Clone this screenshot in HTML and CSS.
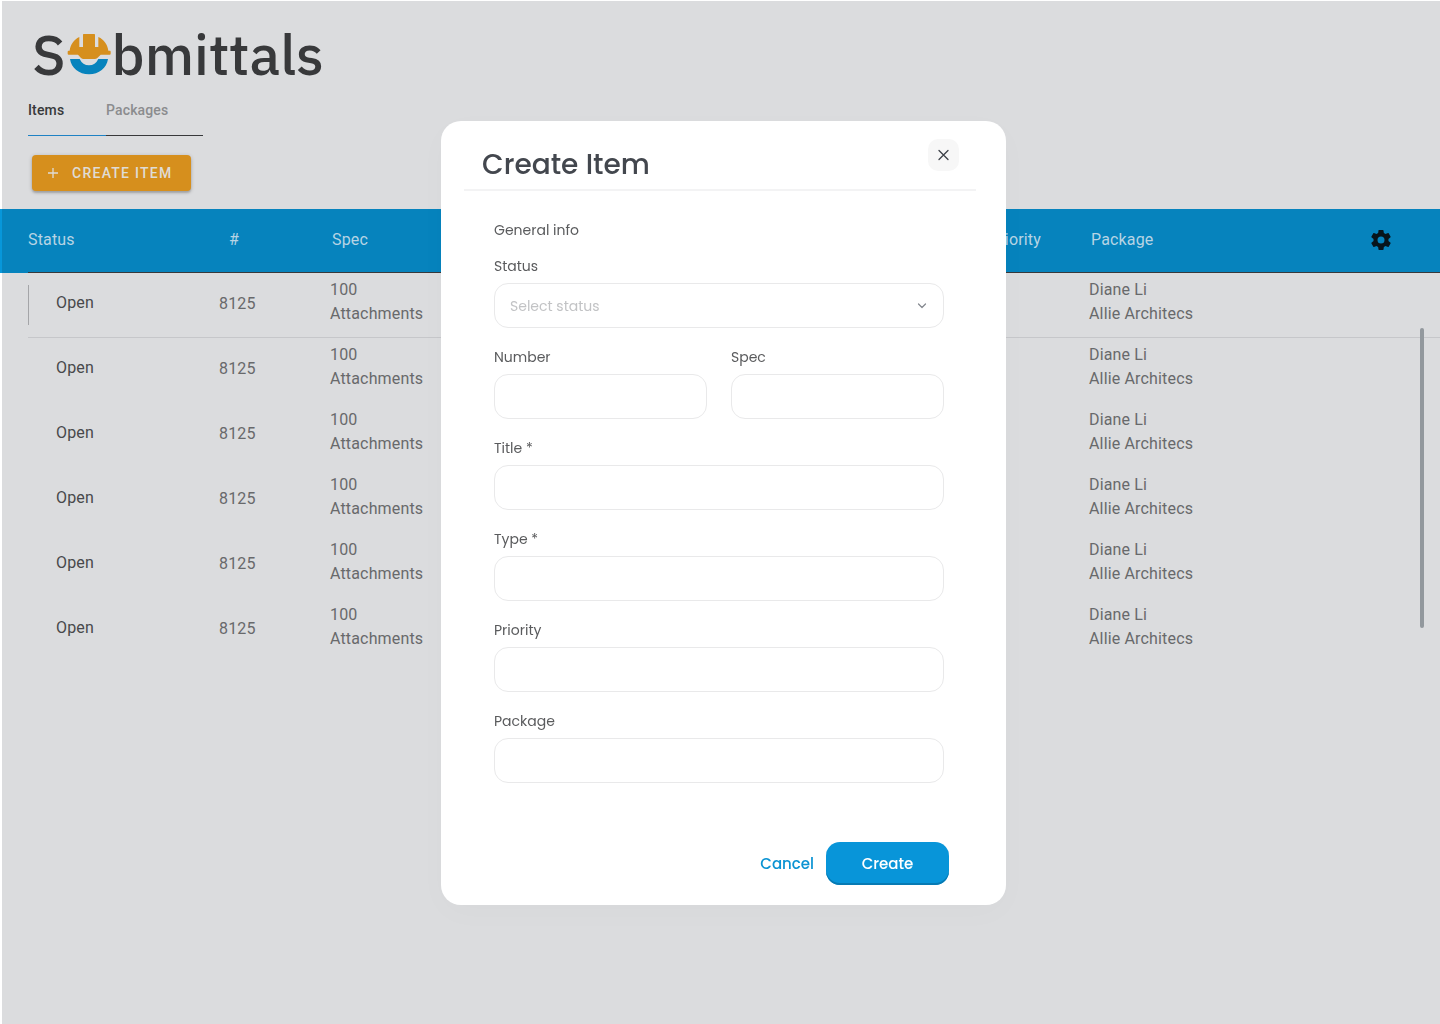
FILE: index.html
```html
<!DOCTYPE html>
<html lang="en">
<head>
  <meta charset="utf-8">
  <meta name="viewport" content="width=device-width, initial-scale=1">
  <title>Submittals</title>
  <link rel="stylesheet" href="styles.css">
</head>
<body>
  <div class="page">
    <header class="top">
      <h1 class="logo" aria-label="Submittals">
        <span>S</span>
        <svg class="logo-mark" viewBox="200 100 132 126" aria-hidden="true">
          <path fill="#d68f1d" d="M250 103H282Q284 103 284 105V142H294V112C312 120 322 136 324 153H329Q331 153 331 156V162Q331 165 328 165H301L291 175Q288 178 283 178H250Q245 178 242 175L233 165H205Q202 165 202 162V156Q202 153 205 153H208C210 136 220 120 237 112V142H248V105Q248 103 250 103Z"/>
          <path fill="#0683bd" d="M209 178H238Q247 197 266 197T294 178H323C319 205 296 224 266 224S213 205 209 178Z"/>
        </svg>
        <span>bmittals</span>
      </h1>
      <nav class="tabs">
        <a class="tab tab-active" href="#items">Items</a>
        <a class="tab" href="#packages">Packages</a>
      </nav>
      <button class="create-item" type="button">
        <svg width="12" height="12" viewBox="0 0 12 12" aria-hidden="true"><path d="M6 1V11M1 6H11" stroke="currentColor" stroke-width="1.3"/></svg>
        CREATE ITEM
      </button>
    </header>

    <main class="list">
      <table class="items">
        <colgroup>
          <col class="col-status"><col class="col-number"><col><col class="col-priority"><col class="col-package"><col class="col-settings">
        </colgroup>
        <thead>
          <tr>
            <th>Status</th><th class="number-head">#</th><th>Spec</th><th>Priority</th><th>Package</th>
            <th>
              <button class="settings" type="button" aria-label="Table settings">
                <svg width="24" height="24" viewBox="0 0 24 24" aria-hidden="true"><path fill="currentColor" d="M12 15.5A3.5 3.5 0 0 1 8.500 12 3.500 3.500 0 0 1 12 8.500a3.500 3.500 0 0 1 3.500 3.500 3.500 3.500 0 0 1-3.500 3.500m7.430-2.530c.04-.32.07-.64.07-.97s-.03-.66-.07-1l2.110-1.630c.19-.15.24-.42.12-.64l-2-3.460c-.12-.22-.39-.31-.61-.22l-2.490 1c-.52-.39-1.060-.73-1.690-.98l-.37-2.650A.506.506 0 0 0 14 2h-4c-.25 0-.46.18-.5.42l-.37 2.650c-.63.25-1.170.59-1.690.98l-2.490-1c-.22-.09-.49 0-.61.22l-2 3.460c-.13.22-.07.49.12.64L4.570 11c-.04.34-.07.67-.07 1s.03.65.07.97l-2.110 1.660c-.19.15-.25.42-.12.64l2 3.460c.12.22.39.3.61.22l2.490-1.010c.52.4 1.060.74 1.690.99l.37 2.650c.04.24.25.42.5.42h4c.25 0 .46-.18.5-.42l.37-2.650c.63-.26 1.170-.59 1.690-.99l2.490 1.010c.22.08.49 0 .61-.22l2-3.460c.12-.22.07-.49-.12-.64z"/></svg>
              </button>
            </th>
          </tr>
        </thead>
        <tbody>
          <tr class="current"><td class="status"><div>Open</div></td><td class="number">8125</td><td>100<br>Attachments</td><td></td><td>Diane Li<br>Allie Architecs</td><td></td></tr>
          <tr><td class="status"><div>Open</div></td><td class="number">8125</td><td>100<br>Attachments</td><td></td><td>Diane Li<br>Allie Architecs</td><td></td></tr>
          <tr><td class="status"><div>Open</div></td><td class="number">8125</td><td>100<br>Attachments</td><td></td><td>Diane Li<br>Allie Architecs</td><td></td></tr>
          <tr><td class="status"><div>Open</div></td><td class="number">8125</td><td>100<br>Attachments</td><td></td><td>Diane Li<br>Allie Architecs</td><td></td></tr>
          <tr><td class="status"><div>Open</div></td><td class="number">8125</td><td>100<br>Attachments</td><td></td><td>Diane Li<br>Allie Architecs</td><td></td></tr>
          <tr><td class="status"><div>Open</div></td><td class="number">8125</td><td>100<br>Attachments</td><td></td><td>Diane Li<br>Allie Architecs</td><td></td></tr>
        </tbody>
      </table>
      <div class="scroll-thumb"></div>
    </main>
  </div>

  <div class="overlay">
    <form class="dialog" role="dialog" aria-labelledby="dialog-title">
      <div class="dialog-head">
        <h2 id="dialog-title">Create Item</h2>
        <button class="close" type="button" aria-label="Close">
          <svg width="11" height="12" viewBox="0 0 11 12" aria-hidden="true"><path d="M1 1.500L10 10.500M10 1.500L1 10.500" stroke="currentColor" stroke-width="1.3" stroke-linecap="round"/></svg>
        </button>
      </div>
      <div class="fields">
        <h3>General info</h3>
        <div class="field">
          <label for="status">Status</label>
          <div class="select">
            <select id="status"><option>Select status</option></select>
            <svg width="10" height="6" viewBox="0 0 10 6" aria-hidden="true"><path d="M1.500 1L5 4.500L8.500 1" fill="none" stroke="currentColor" stroke-width="1.200" stroke-linecap="round" stroke-linejoin="round"/></svg>
          </div>
        </div>
        <div class="pair">
          <div class="field"><label for="number">Number</label><input id="number" type="text"></div>
          <div class="field"><label for="spec">Spec</label><input id="spec" type="text"></div>
        </div>
        <div class="field"><label for="title">Title *</label><input id="title" type="text" required></div>
        <div class="field"><label for="type">Type *</label><input id="type" type="text" required></div>
        <div class="field"><label for="priority">Priority</label><input id="priority" type="text"></div>
        <div class="field"><label for="package">Package</label><input id="package" type="text"></div>
      </div>
      <div class="actions">
        <button class="cancel" type="button">Cancel</button>
        <button class="create" type="submit">Create</button>
      </div>
    </form>
  </div>
</body>
</html>
```
FILE: styles.css
```css
* {
  box-sizing: border-box;
}

body {
  margin: 0;
  background: #dbdcde;
  font-family: Roboto, "Liberation Sans", sans-serif;
}

h1, h2, h3 {
  margin: 0;
}

button {
  border: 0;
  padding: 0;
  background: none;
  font: inherit;
  cursor: pointer;
}

svg {
  display: block;
}

.page {
  min-height: 100vh;
  border-top: 1px solid #fff;
  background: linear-gradient(#fff, #fff) left / 2px 100% no-repeat;
}

/* Page header */
.top {
  display: flex;
  flex-direction: column;
  align-items: flex-start;
  padding: 22px 28px 18px;
}

.logo {
  display: flex;
  align-items: center;
  gap: 1px;
  padding-left: 4px;
  color: #38393b;
  font: 500 56px/62px "IBM Plex Sans", Inter, sans-serif;
  padding-bottom: 2px;
}

.logo-mark {
  width: 44px;
  height: 42px;
}

.tabs {
  display: flex;
}

.tab {
  min-width: 78px;
  height: 49px;
  padding-right: 35px;
  border-bottom: 1px solid #38393b;
  color: #8b8c8e;
  font-size: 14px;
  font-weight: 500;
  line-height: 46px;
  letter-spacing: 0.01em;
  text-decoration: none;
}

.tab-active {
  padding-right: 0;
  border-color: #1f82c4;
  color: #38393b;
}

.create-item {
  display: flex;
  align-items: center;
  gap: 13px;
  height: 36px;
  margin: 19px 0 0 4px;
  padding: 0 18px 0 15px;
  border-radius: 4px;
  background: #d68f1d;
  box-shadow: 0 1px 4px rgba(0, 0, 0, 0.2), 0 2px 2px rgba(0, 0, 0, 0.16);
  color: #dfdcd6;
  font-size: 14px;
  font-weight: 500;
  letter-spacing: 0.09em;
}

/* Items table */
.list {
  position: relative;
  padding-left: 28px;
}

.items {
  width: 100%;
  border-spacing: 0;
  table-layout: fixed;
  color: #68696b;
  font-size: 16px;
  line-height: 24px;
  letter-spacing: 0.01em;
}

.col-status { width: 191px; }
.col-number { width: 111px; }
.col-priority { width: 102px; }
.col-package { width: 278px; }
.col-settings { width: 73px; }

.items th {
  height: 64px;
  padding: 0 0 2px;
  border-bottom: 1px solid #38393b;
  background: #0683bd;
  color: #b7d4e4;
  font-weight: 400;
  text-align: left;
}

.items th + th {
  padding-left: 2px;
}

/* Carries the header colour into the left gutter, past the row rules */
.items th:first-child {
  box-shadow: -26px 0 0 #0683bd, -28px 0 0 #0797da;
}

.items .number-head {
  padding-left: 10px;
}

.items td {
  padding: 5px 0 11px;
  border-bottom: 1px solid transparent;
}

.items .number {
  padding-top: 9px;
}

.items .status {
  padding: 12px 0;
  color: #48494b;
}

.status div {
  height: 40px;
  padding-left: 27px;
  border-left: 1px solid transparent;
  line-height: 36px;
}

.items .current td {
  border-bottom-color: #c6c7ca;
}

.current .status div {
  border-left-color: #a4a5a8;
}

.settings {
  display: block;
  color: #07141b;
}

.scroll-thumb {
  position: absolute;
  top: 119px;
  right: 16px;
  width: 4px;
  height: 300px;
  border-radius: 2px;
  background: #92989d;
}

/* Dialog */
.overlay {
  position: fixed;
  inset: 0;
  display: flex;
  align-items: center;
  justify-content: center;
  padding: 2px 0 0 7px;
}

.dialog {
  width: 565px;
  max-width: 100%;
  border-radius: 20px;
  background: #fff;
  box-shadow: 0 8px 32px rgba(0, 0, 0, 0.02);
  color: #5a5b5d;
  font-family: Poppins, Inter, "Open Sans", sans-serif;
  font-size: 14px;
  line-height: 22px;
}

.dialog-head {
  display: flex;
  justify-content: space-between;
  align-items: flex-start;
  margin: 0 30px 0 23px;
  padding: 18px 17px 0 18px;
  border-bottom: 2px solid #f3f3f4;
}

.dialog-head h2 {
  padding: 5px 0 3px;
  color: #43474e;
  font-size: 28px;
  font-weight: 500;
  line-height: 42px;
}

.close {
  display: grid;
  place-items: center;
  width: 31px;
  height: 32px;
  border-radius: 10px;
  background: #f7f7f7;
  color: #3c4148;
}

.fields {
  display: flex;
  flex-direction: column;
  gap: 18px;
  padding: 28px 62px 0 53px;
}

.fields h3 {
  margin-bottom: -4px;
  font-size: 14px;
  font-weight: 400;
}

.field {
  display: flex;
  flex-direction: column;
  gap: 6px;
}

.pair {
  display: grid;
  grid-template-columns: 1fr 1fr;
  gap: 24px;
}

.field input,
.field select {
  width: 100%;
  height: 45px;
  padding: 0 15px;
  border: 1px solid #e9e9ea;
  border-radius: 14px;
  background: #fff;
  color: #5a5b5d;
  font: inherit;
}

.select {
  display: grid;
  align-items: center;
}

.select select,
.select svg {
  grid-area: 1 / 1;
}

.field select {
  appearance: none;
  color: #c2c3c5;
}

.select svg {
  justify-self: end;
  margin-right: 17px;
  color: #83878e;
  pointer-events: none;
}

.actions {
  display: flex;
  justify-content: flex-end;
  gap: 12px;
  padding: 59px 57px 20px;
  font-size: 15px;
  font-weight: 500;
}

.cancel {
  color: #0a93d3;
}

.create {
  width: 123px;
  height: 43px;
  border-radius: 14px;
  background: #0895d9;
  box-shadow: inset 0 -2px 0 #077ab3;
  color: #fff;
}
```
